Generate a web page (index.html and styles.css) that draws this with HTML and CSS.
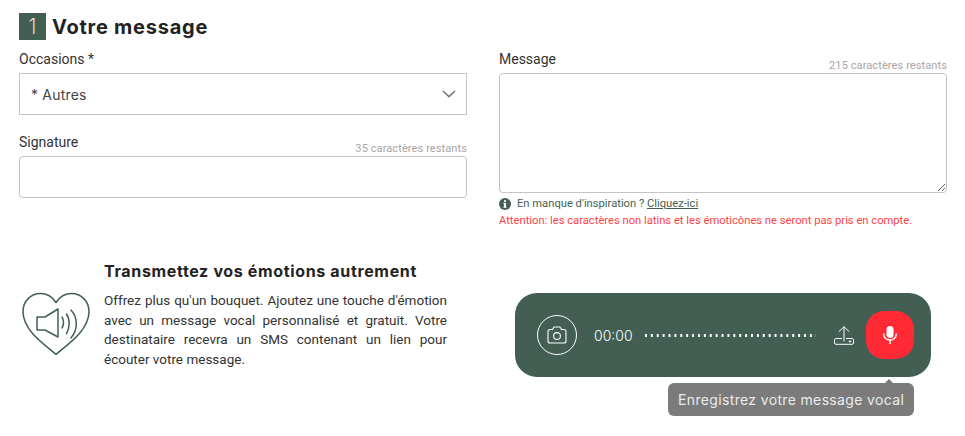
FILE: index.html
```html
<!DOCTYPE html>
<html lang="fr">
<head>
    <meta charset="UTF-8">
    <meta name="viewport" content="width=device-width, initial-scale=1.0">
    <title>Votre message</title>
    <link rel="stylesheet" href="styles.css">
</head>
<body>
    <div class="step-title">
        <span class="step-number">1</span>
        <h1>Votre message</h1>
    </div>

    <div class="columns">
        <div class="left-fields">
            <div class="field">
                <div class="field-head">
                    <label>Occasions *</label>
                </div>
                <div class="select">
                    <span>* Autres</span>
                    <svg width="14" height="8" viewBox="0 0 14 8" fill="none" stroke="#777" stroke-width="1.5"><path d="M1 1l6 5.6L13 1"/></svg>
                </div>
            </div>
            <div class="field field-signature">
                <div class="field-head">
                    <label>Signature</label>
                    <span class="count">35 caractères restants</span>
                </div>
                <input class="input" type="text">
            </div>
        </div>

        <div class="field">
            <div class="field-head">
                <label>Message</label>
                <span class="count">215 caractères restants</span>
            </div>
            <textarea class="textarea"></textarea>
            <div class="hint">
                <svg width="12" height="12" viewBox="0 0 12 12"><circle cx="6" cy="6" r="6" fill="#435f54"/><rect x="5" y="5" width="2" height="4.4" fill="#fff"/><rect x="4.3" y="8.6" width="3.4" height="1" fill="#fff"/><rect x="4.3" y="5" width="2" height="1" fill="#fff"/><circle cx="6" cy="3.2" r="1.1" fill="#fff"/></svg>
                <span>En manque d'inspiration ? <a href="#">Cliquez-ici</a></span>
            </div>
            <p class="warning">Attention: les caractères non latins et les émoticônes ne seront pas pris en compte.</p>
        </div>
    </div>

    <div class="columns voice">
        <div class="voice-info">
            <svg class="heart" width="68" height="64" viewBox="0 0 68 64" fill="none" stroke="#435f54" stroke-width="1.5" stroke-linejoin="round" stroke-linecap="round">
                <path d="M34 62.500C28 56 1.500 41 1 20C.8 9 9 1.500 18.500 1.500C25 1.500 30.500 5 34 10.500C37.500 5 43 1.500 49.500 1.500C59 1.500 67.200 9 67 20C66.500 41 40 56 34 62.500Z"/>
                <path d="M15 25H23L36 17V45L23 38H15Z"/>
                <path d="M40 25C42 28 42 33 40 36"/>
                <path d="M44.500 22C48 27 48 36 44.500 41.500"/>
                <path d="M49 18C56 25.500 56 38 49 46"/>
            </svg>
            <div class="voice-text">
                <h2>Transmettez vos émotions autrement</h2>
                <p>Offrez plus qu'un bouquet. Ajoutez une touche d'émotion avec un message vocal personnalisé et gratuit. Votre destinataire recevra un SMS contenant un lien pour écouter votre message.</p>
            </div>
        </div>

        <div class="recorder">
            <div class="player">
                <button class="camera">
                    <svg width="20" height="18" viewBox="0 0 20 18" fill="none" stroke="#fff" stroke-width="1.1" stroke-linejoin="round"><path d="M3 3.500H5.500L7 1H13L14.500 3.500H17C18.200 3.500 19 4.300 19 5.500V15C19 16.200 18.200 17 17 17H3C1.800 17 1 16.200 1 15V5.500C1 4.300 1.800 3.500 3 3.500Z"/><circle cx="10" cy="10" r="3.400"/></svg>
                </button>
                <span class="time">00:00</span>
                <div class="wave"></div>
                <svg class="upload" width="20" height="19" viewBox="0 0 20 19" fill="none" stroke="#fff" stroke-width="1" stroke-linejoin="round" stroke-linecap="round"><path d="M10 15V.8M5 5.500L10 .8L15 5.500"/><path d="M7.500 12.500H1.800C1 12.500 .5 13 .5 13.800V17C.5 17.800 1 18.300 1.800 18.300H18.200C19 18.300 19.500 17.800 19.500 17V13.800C19.500 13 19 12.500 18.200 12.500H12.500"/><circle cx="16" cy="15.400" r=".7" fill="#fff"/></svg>
                <button class="record">
                    <svg width="14" height="18" viewBox="0 0 14 18" fill="none"><rect x="3.500" y="0" width="7" height="12" rx="3.500" fill="#fff"/><path d="M.8 8C.8 11.800 3.500 14 7 14S13.200 11.800 13.200 8" stroke="#fff" stroke-width="1.500" stroke-linecap="round"/><path d="M7 14V18" stroke="#fff" stroke-width="1.500"/></svg>
                </button>
            </div>
            <div class="record-bubble">Enregistrez votre message vocal</div>
        </div>
    </div>
</body>
</html>
```
FILE: styles.css
```css
* {
    margin: 0;
    padding: 0;
    box-sizing: border-box;
}

body {
    font-family: Roboto, sans-serif;
    background: #fff;
    color: #2b2b2b;
    padding: 13px 18px 0 19px;
}

.step-title {
    display: flex;
    align-items: center;
    gap: 6px;
    height: 27px;
}

.step-number {
    width: 27px;
    height: 27px;
    background: #435f54;
    color: #fff;
    font-family: Inter, sans-serif;
    font-weight: 200;
    font-size: 21px;
    line-height: 27px;
    text-align: center;
}

.step-title h1 {
    font-family: Inter, sans-serif;
    font-size: 20px;
    font-weight: 700;
    letter-spacing: 0.75px;
    color: #222;
}

.columns {
    display: grid;
    grid-template-columns: 448px 448px;
    gap: 32px;
}

.field-head {
    display: flex;
    justify-content: space-between;
    align-items: flex-end;
    height: 33px;
    padding-bottom: 6px;
}

.field-head label {
    font-size: 14px;
    line-height: 17px;
    margin-bottom: -1px;
    color: #333;
}

.count {
    font-size: 11px;
    line-height: 12px;
    margin-bottom: -5px;
    color: #a6a6a6;
    letter-spacing: 0.1px;
}

.select {
    display: flex;
    justify-content: space-between;
    align-items: center;
    height: 42px;
    padding: 0 10px 0 11px;
    border: 1px solid #c4c4c4;
    font-family: Inter, sans-serif;
    font-size: 14px;
    letter-spacing: 0.2px;
    color: #444;
}

.field-signature {
    margin-top: 8px;
}

.input {
    display: block;
    width: 100%;
    height: 42px;
    border: 1px solid #c4c4c4;
    border-radius: 4px;
    background: #fff;
}

.textarea {
    display: block;
    width: 100%;
    height: 120px;
    border: 1px solid #c4c4c4;
    border-radius: 4px;
    background: #fff;
}

.hint {
    display: flex;
    align-items: center;
    gap: 6px;
    margin-top: 5px;
    font-size: 11.200px;
    line-height: 12px;
    color: #435f54;
}

.hint a {
    color: #435f54;
}

.warning {
    margin-top: 5px;
    font-size: 11.200px;
    line-height: 12px;
    color: #ff4444;
}

.voice {
    margin-top: 35px;
}

.voice-info {
    display: flex;
    align-items: flex-start;
    gap: 14px;
    height: 110px;
    padding: 0 20px 0 3px;
}

.heart {
    flex: none;
    margin-top: 30px;
}

.voice-text h2 {
    font-family: Inter, sans-serif;
    font-size: 16px;
    line-height: 18px;
    font-weight: 700;
    letter-spacing: 0.65px;
    color: #222;
    margin-bottom: 11px;
}

.voice-text p {
    font-size: 13.500px;
    line-height: 19.600px;
    text-align: justify;
    color: #333;
}

.recorder {
    display: flex;
    flex-direction: column;
    align-items: flex-end;
    padding: 31px 16px 0 16px;
}

.player {
    display: flex;
    align-items: center;
    width: 416px;
    height: 84px;
    padding: 0 17px 0 22px;
    background: #435f54;
    border-radius: 22px;
}

.camera {
    display: flex;
    align-items: center;
    justify-content: center;
    flex: none;
    width: 40px;
    height: 40px;
    border: 1px solid #fff;
    border-radius: 50%;
    background: none;
}

.time {
    margin-left: 17px;
    font-family: Inter, sans-serif;
    font-size: 14px;
    font-weight: 300;
    color: #fff;
}

.wave {
    width: 173px;
    height: 3px;
    margin-left: 10px;
    background: radial-gradient(circle, #fff 1.100px, transparent 1.400px) 0 0 / 5.900px 3px repeat-x;
}

.upload {
    flex: none;
    margin-left: 18px;
}

.record {
    display: flex;
    align-items: center;
    justify-content: center;
    flex: none;
    width: 48px;
    height: 48px;
    margin-left: 12px;
    border: none;
    border-radius: 38%;
    background: #ff2a33;
}

.record-bubble {
    position: relative;
    flex: none;
    width: 246px;
    height: 33px;
    margin: 6px 17px 0 0;
    padding-left: 10px;
    background: #7b7b7b;
    border-radius: 6px;
    font-family: Inter, sans-serif;
    font-size: 14px;
    line-height: 33px;
    letter-spacing: 0.35px;
    color: #ececec;
    white-space: nowrap;
}

.record-bubble::before {
    content: "";
    position: absolute;
    top: -4px;
    right: 21px;
    border-left: 4px solid transparent;
    border-right: 4px solid transparent;
    border-bottom: 4px solid #7b7b7b;
}
```
